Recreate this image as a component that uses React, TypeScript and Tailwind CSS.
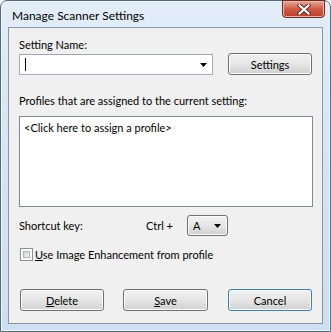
import React from 'react';

const btnBase =
  'h-[22px] rounded-[3px] border text-[11px] leading-[15px] text-black flex items-center justify-center bg-gradient-to-b from-[#f2f2f2] via-[#e6e6e6] to-[#d0d0d0] shadow-[inset_0_0_0_1px_#fcfcfc]';

const Button: React.FC<{ className?: string; isDefault?: boolean; children: React.ReactNode }> = ({
  className = '',
  isDefault,
  children,
}) => (
  <div
    className={`${btnBase} ${
      isDefault ? 'border-[#3c7fb1] shadow-[inset_0_0_0_1px_#a3e0f8]' : 'border-[#707070]'
    } ${className}`}
  >
    {children}
  </div>
);

const Arrow = () => (
  <svg width="7" height="4" viewBox="0 0 7 4">
    <path d="M0 0h7L3.5 4z" fill="#000" />
  </svg>
);

const App: React.FC = () => {
  return (
    <div className="w-[331px] h-[332px] bg-white font-['Lato',sans-serif] text-[11px] leading-[15px] text-black">
      <div className="w-[331px] h-[332px] rounded-t-[7px] border border-[#56697d] bg-gradient-to-b from-[#e2edf8] via-[#d5e4f3] to-[#cddff1] flex flex-col shadow-[inset_0_0_0_1px_#eef5fc]">
        {/* title bar */}
        <div className="h-[26px] flex items-start justify-between shrink-0">
          <span className="pl-[11px] pt-[7px] text-[12px] leading-[15px] text-black">Manage Scanner Settings</span>
          <div className="mr-[5px] mt-[-1px] w-[43px] h-[18px] rounded-b-[4px] border border-[#6b2a22] bg-gradient-to-b from-[#e8a89b] via-[#cf5b45] to-[#b8402c] flex items-center justify-center shadow-[inset_0_0_0_1px_#f0b5a8]">
            <svg width="14" height="11" viewBox="0 0 14 11">
              <path d="M2.5 1.5l9 8M11.5 1.5l-9 8" stroke="#5b2a24" strokeWidth="4" strokeLinecap="square" />
              <path d="M2.5 1.5l9 8M11.5 1.5l-9 8" stroke="#ffffff" strokeWidth="2.2" strokeLinecap="square" />
            </svg>
          </div>
        </div>

        {/* client area */}
        <div className="flex-1 mx-[7px] mb-[7px] border border-[#8797a9] bg-[#f0f0f0] pl-[10px] pr-[10px] pt-[9px] flex flex-col">
          <div>Setting Name:</div>
          <div className="flex items-start mt-[2px]">
            <div className="w-[194px] h-[21px] bg-white border border-[#abadb3] border-t-[#a3a8ae] flex items-center justify-between pl-[5px] pr-[5px]">
              <div className="w-px h-[13px] bg-black" />
              <Arrow />
            </div>
            <Button className="ml-[15px] mt-[-1px] w-[84px]">Settings</Button>
          </div>

          <div className="mt-[18px]">Profiles that are assigned to the current setting:</div>
          <div className="mt-[8px] w-[294px] h-[91px] bg-white border border-[#828790] pl-[4px] pt-[3px]">
            &lt;Click here to assign a profile&gt;
          </div>

          <div className="mt-[8px] flex items-center h-[21px]">
            <span className="w-[127px]">Shortcut key:</span>
            <span className="w-[41px]">Ctrl +</span>
            <div className="w-[41px] h-[21px] rounded-[3px] border border-[#707070] bg-gradient-to-b from-[#f2f2f2] via-[#e6e6e6] to-[#d0d0d0] shadow-[inset_0_0_0_1px_#fcfcfc] flex items-center justify-between pl-[5px] pr-[6px]">
              <span>A</span>
              <Arrow />
            </div>
          </div>

          <div className="mt-[11px] flex items-center h-[15px]">
            <div className="ml-[1px] w-[13px] h-[13px] border border-[#8f8f8f] bg-white p-[2px]">
              <div className="w-full h-full bg-gradient-to-br from-[#cbcfd5] to-[#f6f6f6] border border-[#aeb3b9]" />
            </div>
            <span className="ml-[2px]">
              <span className="underline">U</span>se Image Enhancement from profile
            </span>
          </div>

          <div className="mt-[27px] flex">
            <Button className="ml-[1px] w-[84px]">
              <span>
                <span className="underline">D</span>elete
              </span>
            </Button>
            <Button className="ml-[19px] w-[85px]">
              <span>
                <span className="underline">S</span>ave
              </span>
            </Button>
            <Button isDefault className="ml-[20px] w-[84px]">
              Cancel
            </Button>
          </div>
        </div>
      </div>
    </div>
  );
};

export default App;
